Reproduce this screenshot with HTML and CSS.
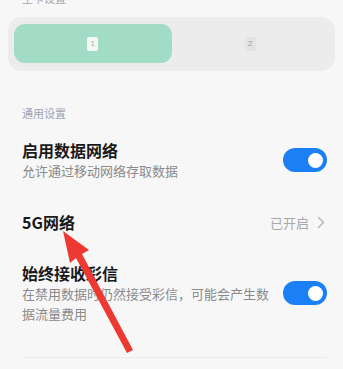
FILE: index.html
```html
<!DOCTYPE html>
<html lang="zh-CN">
<head>
    <meta charset="UTF-8">
    <meta name="viewport" content="width=device-width, initial-scale=1.0">
    <title>移动网络</title>

    <link rel="stylesheet" href="styles.css">
</head>
<body>
    <div class="page">
        <div class="top-label">主卡设置</div>

        <div class="sim-switch">
            <div class="sim active"><span class="sim-icon">1</span></div>
            <div class="sim"><span class="sim-icon">2</span></div>
        </div>

        <div class="section-title">通用设置</div>

        <div class="row first">
            <div class="row-text">
                <div class="row-title">启用数据网络</div>
                <div class="row-sub">允许通过移动网络存取数据</div>
            </div>
            <div class="toggle"><span class="knob"></span></div>
        </div>

        <div class="row link">
            <div class="row-text">
                <div class="row-title">5G网络</div>
            </div>
            <div class="row-value">
                已开启
                <svg width="8" height="13" viewBox="0 0 8 13"><path d="M1.5 1.5 L6.5 6.5 L1.5 11.5" fill="none" stroke="#b3b3b3" stroke-width="1.4" stroke-linecap="round" stroke-linejoin="round"/></svg>
            </div>
        </div>

        <div class="row last">
            <div class="row-text">
                <div class="row-title">始终接收彩信</div>
                <div class="row-sub">在禁用数据时仍然接受彩信，可能会产生数据流量费用</div>
            </div>
            <div class="toggle"><span class="knob"></span></div>
        </div>

        <div class="divider"></div>

        <!-- red annotation arrow drawn over the screenshot -->
        <svg class="arrow" width="343" height="369" viewBox="0 0 343 369">
            <polygon points="63,239 89,258 82,262 133,358 127,361 76,266 70,271" fill="#ec3a32"/>
        </svg>
    </div>
</body>
</html>
```

FILE: styles.css
```css
body{
    margin: 0;
    background-color: #f7f7f8;
    font-family: "Noto Sans CJK SC", "Noto Sans", sans-serif;
    overflow: hidden;
}
.page{
    position: relative;
    width: 343px;
    height: 369px;
}
.top-label{
    height: 12px;
    margin-top: -8px;
    padding-left: 22px;
    font-size: 11px;
    line-height: 12px;
    color: #a8a8a8;
}
.sim-switch{
    margin: 13px 8px 0 8px;
    height: 54px;
    box-sizing: border-box;
    padding: 7px 6px 8px 6px;
    background-color: #ececed;
    border-radius: 14px;
    display: flex;
}
.sim{
    flex: 1;
    display: flex;
    align-items: center;
    justify-content: center;
    border-radius: 11px;
}
.sim.active{
    background-color: #a2dcc6;
}
.sim-icon{
    width: 11px;
    height: 14px;
    border-radius: 2px;
    background-color: #e3e3e3;
    color: #9a9a9a;
    font-family: "Liberation Sans", sans-serif;
    font-size: 8px;
    line-height: 14px;
    text-align: center;
}
.sim.active .sim-icon{
    background-color: #f4f7f6;
    color: #9fb5ad;
}
.section-title{
    margin-top: 34px;
    padding-left: 22px;
    font-size: 11px;
    line-height: 16px;
    color: #9ea3b4;
}
.row{
    display: flex;
    align-items: center;
    padding: 0 16px 0 22px;
}
.row.first{
    margin-top: 18px;
}
.row.link{
    margin-top: 30px;
}
.row.last{
    margin-top: 29px;
}
.row-text{
    flex: 1;
    margin-right: 11px;
}
.row-title{
    font-size: 16px;
    line-height: 22px;
    font-weight: 600;
    color: #1a1a1a;
}
.row-sub{
    font-size: 13px;
    line-height: 20px;
    color: #8a8a8a;
}
.row-value{
    display: flex;
    align-items: center;
    gap: 8px;
    font-size: 13px;
    color: #a8a8a8;
    padding-right: 2px;
}
.toggle{
    width: 44px;
    height: 24px;
    box-sizing: border-box;
    padding: 0 4px;
    border-radius: 12px;
    background-color: #1b7ff5;
    display: flex;
    align-items: center;
    justify-content: flex-end;
}
.knob{
    width: 15px;
    height: 15px;
    border-radius: 50%;
    background-color: #ffffff;
}
.divider{
    margin: 33px 16px 0 22px;
    height: 1px;
    background-color: #ebebeb;
}
.arrow{
    position: absolute;
    left: 0;
    top: 0;
    pointer-events: none;
}
```
